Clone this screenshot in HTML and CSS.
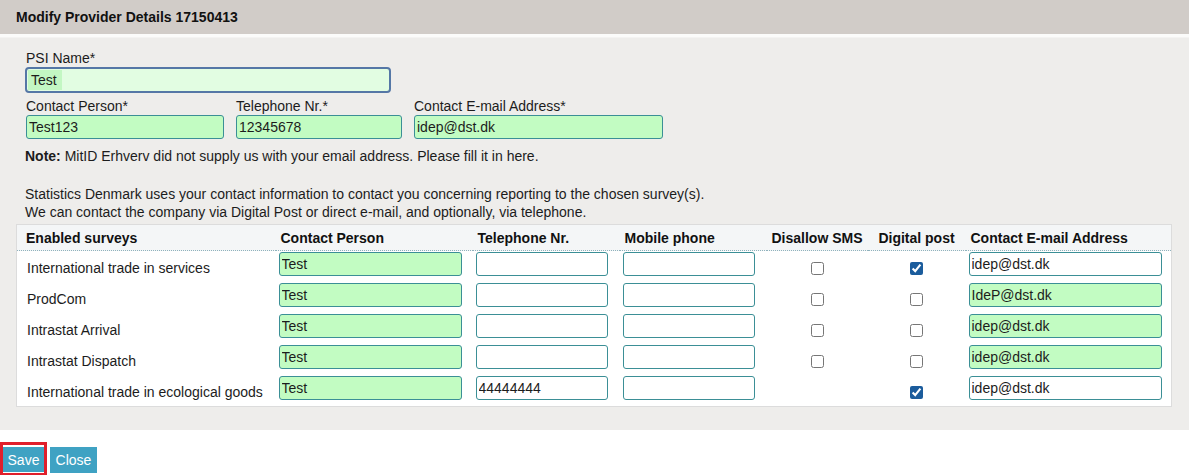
FILE: index.html
```html
<!DOCTYPE html>
<html>
<head>
<meta charset="utf-8">
<link rel="stylesheet" href="styles.css">
</head>
<body>
<div class="title">Modify Provider Details 17150413</div>
<div class="panel">
  <div class="form">
    <div class="lbl">PSI Name*</div>
    <div class="psi"><span class="hl">Test</span></div>
    <div class="line3">
      <div class="field w-cp">
        <div class="lbl">Contact Person*</div>
        <input class="inp green" type="text" value="Test123">
      </div>
      <div class="field w-tel">
        <div class="lbl">Telephone Nr.*</div>
        <input class="inp green" type="text" value="12345678">
      </div>
      <div class="field w-mail">
        <div class="lbl">Contact E-mail Address*</div>
        <input class="inp green" type="text" value="idep@dst.dk">
      </div>
    </div>
    <div class="note"><b>Note:</b> MitID Erhverv did not supply us with your email address. Please fill it in here.</div>
    <div class="info">Statistics Denmark uses your contact information to contact you concerning reporting to the chosen survey(s).<br>We can contact the company via Digital Post or direct e-mail, and optionally, via telephone.</div>
  </div>
  <table class="surveys">
    <colgroup>
      <col class="c1"><col class="c2"><col class="c3"><col class="c4"><col class="c5"><col class="c6"><col class="c7">
    </colgroup>
    <thead>
      <tr>
        <th class="first">Enabled surveys</th>
        <th>Contact Person</th>
        <th>Telephone Nr.</th>
        <th>Mobile phone</th>
        <th class="ctr">Disallow SMS</th>
        <th class="ctr">Digital post</th>
        <th>Contact E-mail Address</th>
      </tr>
    </thead>
    <tbody>
      <tr>
        <td class="name">International trade in services</td>
        <td><input class="cell green w183" type="text" value="Test"></td>
        <td><input class="cell w132" type="text" value=""></td>
        <td><input class="cell w132" type="text" value=""></td>
        <td class="ctr"><input type="checkbox" class="cb"></td>
        <td class="ctr"><input type="checkbox" class="cb" checked></td>
        <td><input class="cell w192" type="text" value="idep@dst.dk"></td>
      </tr>
      <tr>
        <td class="name">ProdCom</td>
        <td><input class="cell green w183" type="text" value="Test"></td>
        <td><input class="cell w132" type="text" value=""></td>
        <td><input class="cell w132" type="text" value=""></td>
        <td class="ctr"><input type="checkbox" class="cb"></td>
        <td class="ctr"><input type="checkbox" class="cb"></td>
        <td><input class="cell green w192" type="text" value="IdeP@dst.dk"></td>
      </tr>
      <tr>
        <td class="name">Intrastat Arrival</td>
        <td><input class="cell green w183" type="text" value="Test"></td>
        <td><input class="cell w132" type="text" value=""></td>
        <td><input class="cell w132" type="text" value=""></td>
        <td class="ctr"><input type="checkbox" class="cb"></td>
        <td class="ctr"><input type="checkbox" class="cb"></td>
        <td><input class="cell green w192" type="text" value="idep@dst.dk"></td>
      </tr>
      <tr>
        <td class="name">Intrastat Dispatch</td>
        <td><input class="cell green w183" type="text" value="Test"></td>
        <td><input class="cell w132" type="text" value=""></td>
        <td><input class="cell w132" type="text" value=""></td>
        <td class="ctr"><input type="checkbox" class="cb"></td>
        <td class="ctr"><input type="checkbox" class="cb"></td>
        <td><input class="cell green w192" type="text" value="idep@dst.dk"></td>
      </tr>
      <tr>
        <td class="name">International trade in ecological goods</td>
        <td><input class="cell green w183" type="text" value="Test"></td>
        <td><input class="cell w132" type="text" value="44444444"></td>
        <td><input class="cell w132" type="text" value=""></td>
        <td class="ctr"></td>
        <td class="ctr"><input type="checkbox" class="cb" checked></td>
        <td><input class="cell w192" type="text" value="idep@dst.dk"></td>
      </tr>
    </tbody>
  </table>
</div>
<div class="buttons">
  <span class="marked"><button class="btn">Save</button></span>
  <button class="btn">Close</button>
</div>
</body>
</html>
```

FILE: styles.css
```css
html, body {
  margin: 0;
  padding: 0;
  background: #ffffff;
  font-family: "Liberation Sans", Arial, sans-serif;
  font-size: 14px;
  color: #1c1c1c;
}

.title {
  height: 34px;
  line-height: 34px;
  background: #d1ccc8;
  padding-left: 16px;
  font-weight: bold;
  font-size: 14px;
  color: #111;
  border-bottom: 3px solid #fbfbfa;
}

.panel {
  background: #eeedeb;
  border-top: 1px solid #f4f3f2;
  padding: 12px 18px 23px 16px;
}

.form {
  padding-left: 10px;
}

.lbl {
  line-height: 16px;
  height: 16px;
  color: #1c1c1c;
}

.psi {
  box-sizing: border-box;
  margin-top: 1px;
  margin-left: -1px;
  width: 366px;
  height: 26px;
  border: 2px solid #5577a6;
  border-radius: 4px;
  background: #e2fde2;
  padding: 1px 0 0 1px;
}

.hl {
  display: inline-block;
  background: #c3f7c3;
  line-height: 20px;
  padding: 0 5px 0 3px;
  color: #1c1c1c;
}

.line3 {
  display: flex;
  gap: 12px;
  margin-top: 5px;
}

.field .inp {
  margin-top: 1px;
}

.inp, .cell {
  display: block;
  box-sizing: border-box;
  height: 24px;
  border: 1px solid #3b8f96;
  border-radius: 3px;
  background: #ffffff;
  font-family: "Liberation Sans", Arial, sans-serif;
  font-size: 14px;
  color: #1c1c1c;
  padding: 0 2px;
  outline: none;
}

.inp.green, .cell.green {
  background: #c2fcc2;
}

.w-cp .inp { width: 198px; }
.w-tel .inp { width: 166px; }
.w-mail .inp { width: 249px; }

.note {
  margin-top: 9px;
  margin-left: -1px;
  line-height: 16px;
}

.info {
  margin-top: 21px;
  line-height: 18px;
  margin-left: -1px;
}

.surveys {
  margin-top: 3px;
  table-layout: fixed;
  width: 1155px;
  border-collapse: collapse;
  border-spacing: 0;
  background: #ffffff;
  border: 1px solid #dcdcdc;
}

.c1 { width: 259px; }
.c2 { width: 197px; }
.c3 { width: 147px; }
.c4 { width: 147px; }
.c5 { width: 101px; }
.c6 { width: 98px; }
.c7 { width: 206px; }

.surveys th {
  background: #f4f6f7;
  text-align: left;
  font-weight: bold;
  font-size: 14px;
  line-height: 16px;
  padding: 5px 0 4px 5px;
  border-bottom: 1px dotted #8fb2bd;
  white-space: nowrap;
  color: #111;
}

.surveys th.first {
  padding-left: 9px;
}

.surveys th.ctr {
  text-align: center;
  padding-left: 0;
}

.surveys td {
  padding: 1px 0 6px 3px;
  vertical-align: top;
}

.surveys td.name {
  padding: 9px 0 0 10px;
  line-height: 16px;
  white-space: nowrap;
}

.surveys td.ctr {
  text-align: center;
  vertical-align: middle;
  padding: 1px 0 0 0;
}

.w183 { width: 183px; }
.w132 { width: 132px; }
.w192 { width: 193px; }

.cb {
  width: 13px;
  height: 13px;
  margin: 0;
  vertical-align: middle;
  accent-color: #1b5c9c;
}

.buttons {
  display: flex;
  align-items: flex-start;
  gap: 3px;
  padding-top: 12px;
}

.marked {
  display: inline-block;
  border: 3px solid #e01f2b;
  padding: 2px 0 0 0;
  height: 34px;
  box-sizing: border-box;
  width: 47px;
}

.marked .btn {
  width: 41px;
  height: 25px;
  margin-top: 0;
}

.btn {
  border: none;
  background: #3fa2c3;
  color: #ffffff;
  font-family: "Liberation Sans", Arial, sans-serif;
  font-size: 14px;
  height: 26px;
  width: 47px;
  padding: 0;
  margin-top: 5px;
}
```
